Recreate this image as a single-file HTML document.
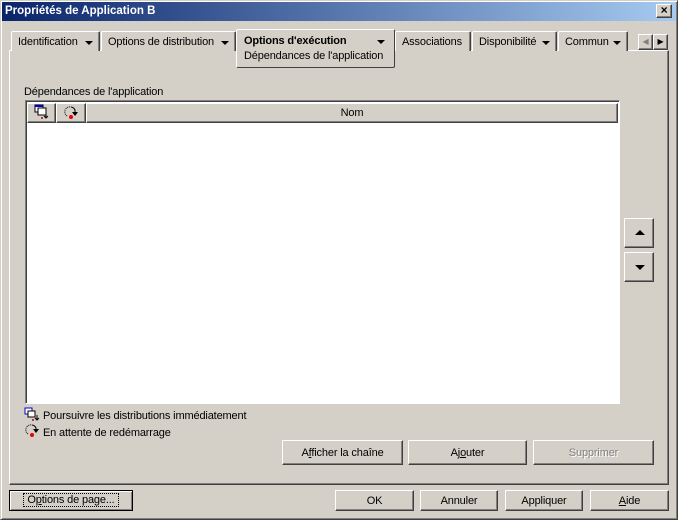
<!DOCTYPE html>
<html><head><style>
*{box-sizing:border-box;margin:0;padding:0}
body{width:678px;height:520px;background:#d4d0c8;font-family:"Liberation Sans",sans-serif;font-size:11px;letter-spacing:-0.15px;color:#000;position:relative;overflow:hidden}
.abs{position:absolute}
.win{left:0;top:0;width:678px;height:520px;border-top:1px solid #d4d0c8;border-left:1px solid #d4d0c8;border-right:1px solid #404040;border-bottom:1px solid #404040;box-shadow:inset 1px 1px #fff,inset -1px -1px #808080}
.title{left:2px;top:2px;width:674px;height:19px;background:linear-gradient(90deg,#0a246a,#a6caf0);color:#fff;font-weight:bold;font-size:11.5px;line-height:19px;padding-left:3px;letter-spacing:0}
.btn{position:absolute;background:#d4d0c8;border-top:1px solid #fff;border-left:1px solid #fff;border-right:1px solid #404040;border-bottom:1px solid #404040;box-shadow:inset -1px -1px #808080;text-align:center;font-size:11px}
.panel{left:9px;top:50px;width:660px;height:435px;border-top:1px solid #fff;border-left:1px solid #fff;border-right:1px solid #404040;border-bottom:1px solid #404040;box-shadow:inset -1px -1px #808080}
.tab{position:absolute;top:31px;height:20px;border-top:1px solid #fff;border-left:1px solid #fff;border-right:1px solid #404040;box-shadow:inset -1px 0 #808080;line-height:20px;padding-left:6px;font-size:11px;background:#d4d0c8;border-radius:2px 2px 0 0}
.ar{position:absolute;width:0;height:0;border-left:4px solid transparent;border-right:4px solid transparent;border-top:4px solid #000;top:8px}
.list{left:25px;top:100px;width:595px;height:304px;background:#fff;border-top:1px solid #808080;border-left:1px solid #808080;border-right:1px solid #fff;border-bottom:1px solid #fff;box-shadow:inset 1px 1px #404040}
.hd{position:absolute;top:2px;height:20px;background:#d4d0c8;border-top:1px solid #fff;border-left:1px solid #fff;border-right:1px solid #404040;border-bottom:1px solid #404040;box-shadow:inset -1px -1px #808080;text-align:center;line-height:18px}
</style></head><body>
<div class="abs win"></div>
<div class="abs title">Propriétés de Application B</div>
<div class="btn" style="left:656px;top:4px;width:16px;height:14px;line-height:11px;font-size:12px;font-weight:bold">×</div>
<div class="abs panel"></div>
<div class="tab" style="left:11px;width:89px">Identification<span class="ar" style="left:73px;top:9px"></span></div>
<div class="tab" style="left:101px;width:135px">Options de distribution<span class="ar" style="left:119px;top:9px"></span></div>
<div class="tab" style="left:472px;width:85px">Disponibilité<span class="ar" style="left:69px;top:9px"></span></div>
<div class="tab" style="left:395px;width:76px">Associations</div>
<div class="tab" style="left:558px;width:70px">Commun<span class="ar" style="left:54px;top:9px"></span></div>
<div class="abs" style="left:236px;top:29px;width:159px;height:39px;background:#d4d0c8;border:1px solid #fff;border-right-color:#404040;border-bottom-color:#404040;border-radius:2px"></div>
<div class="abs" style="left:244px;top:35px;font-weight:bold;font-size:11px">Options d'exécution</div>
<span class="ar" style="left:377px;top:40px"></span>
<div class="abs" style="left:244px;top:50px">Dépendances de l'application</div>
<div class="btn" style="left:638px;top:34px;width:15px;height:16px;color:#808080;font-size:8px;line-height:14px">◀</div>
<div class="btn" style="left:653px;top:34px;width:15px;height:16px;font-size:8px;line-height:14px">▶</div>
<div class="abs" style="left:24px;top:86px">Dépendances de l'application</div>
<div class="abs list">
<div class="hd" style="left:1px;width:29px"><svg width="18" height="16" viewBox="0 0 18 16"><rect x="2" y="1" width="8" height="7" fill="#fff" stroke="#000"/><rect x="2" y="1" width="8" height="2" fill="#00c"/><rect x="5" y="4" width="8" height="7" fill="#fff" stroke="#000"/><path d="M13 9v5M11 12l2 2 2-2" stroke="#000" fill="none"/><circle cx="9" cy="14" r="1" fill="#c00"/></svg></div>
<div class="hd" style="left:30px;width:30px"><svg width="18" height="16" viewBox="0 0 18 16"><path d="M5 12A5 5 0 0 1 9 3" stroke="#000" stroke-dasharray="1 1" fill="none"/><path d="M9 3a5 5 0 0 1 4 3v3" stroke="#000" fill="none"/><path d="M10 8h6l-3 4z" fill="#000"/><circle cx="9" cy="13" r="2" fill="#e00"/></svg></div>
<div class="hd" style="left:60px;width:532px">Nom</div>
</div>
<svg class="abs" style="left:24px;top:407px" width="18" height="30" viewBox="0 0 18 30"><rect x="1" y="1" width="7" height="6" fill="#fff" stroke="#00c"/><rect x="4" y="4" width="7" height="6" fill="#fff" stroke="#000"/><path d="M13 8v5M11 11l2 2 2-2" stroke="#000" fill="none"/><circle cx="9" cy="13" r="1" fill="#c00"/><path d="M4 27A5 5 0 0 1 8 18" stroke="#000" stroke-dasharray="1 1" fill="none"/><path d="M8 18a5 5 0 0 1 4 3v2" stroke="#000" fill="none"/><path d="M9 22h6l-3 4z" fill="#000"/><circle cx="8" cy="28" r="2" fill="#e00"/></svg>
<div class="abs" style="left:43px;top:410px">Poursuivre les distributions immédiatement</div>
<div class="abs" style="left:43px;top:427px">En attente de redémarrage</div>
<div class="btn" style="left:624px;top:218px;width:30px;height:30px"><span class="abs" style="left:10px;top:11px;border-left:5px solid transparent;border-right:5px solid transparent;border-bottom:5px solid #000;width:0;height:0"></span></div>
<div class="btn" style="left:624px;top:252px;width:30px;height:30px"><span class="abs" style="left:10px;top:12px;border-left:5px solid transparent;border-right:5px solid transparent;border-top:5px solid #000;width:0;height:0"></span></div>
<div class="btn" style="left:282px;top:440px;width:121px;height:25px;line-height:25px">A<u>f</u>ficher la chaîne</div>
<div class="btn" style="left:408px;top:440px;width:119px;height:25px;line-height:25px">Aj<u>o</u>uter</div>
<div class="btn" style="left:533px;top:440px;width:121px;height:25px;line-height:25px;color:#808080;text-shadow:1px 1px #fff">Supprimer</div>
<div class="btn" style="left:9px;top:490px;width:124px;height:21px;line-height:19px;border:1px solid #000;box-shadow:inset 1px 1px #fff,inset -1px -1px #808080"><span style="outline:1px dotted #000;padding:0 3px">O<u>p</u>tions de page...</span></div>
<div class="btn" style="left:335px;top:490px;width:79px;height:21px;line-height:21px">OK</div>
<div class="btn" style="left:420px;top:490px;width:78px;height:21px;line-height:21px">Annuler</div>
<div class="btn" style="left:505px;top:490px;width:78px;height:21px;line-height:21px">Appliquer</div>
<div class="btn" style="left:590px;top:490px;width:79px;height:21px;line-height:21px"><u>A</u>ide</div>
</body></html>
